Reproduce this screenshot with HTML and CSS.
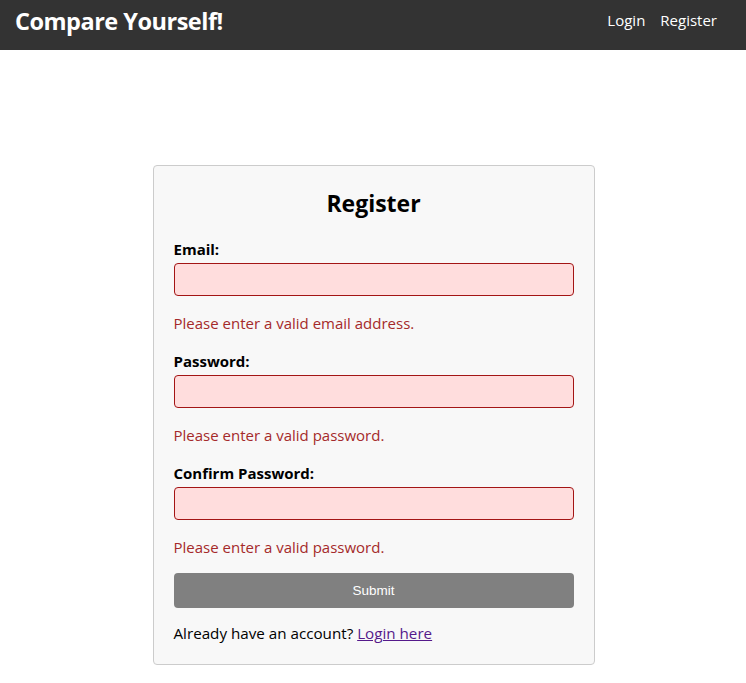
FILE: index.html
```html
<!DOCTYPE html>
<html lang="en">
<head>
<meta charset="utf-8">
<title>Compare Yourself</title>
<link rel="stylesheet" href="styles.css">
</head>
<body>
<header class="topbar">
  <div class="brand">Compare Yourself!</div>
  <nav class="nav">
    <a class="nav-link" href="#">Login</a>
    <a class="nav-link" href="#">Register</a>
  </nav>
</header>
<main class="page">
  <form class="card">
    <h2 class="card-title">Register</h2>
    <div class="field">
      <label class="label">Email:</label>
      <input class="input" type="text">
      <p class="error">Please enter a valid email address.</p>
    </div>
    <div class="field">
      <label class="label">Password:</label>
      <input class="input" type="password">
      <p class="error">Please enter a valid password.</p>
    </div>
    <div class="field">
      <label class="label">Confirm Password:</label>
      <input class="input" type="password">
      <p class="error">Please enter a valid password.</p>
    </div>
    <button class="submit" type="button">Submit</button>
    <p class="alt">Already have an account? <a class="alt-link" href="#">Login here</a></p>
  </form>
</main>
</body>
</html>
```
FILE: styles.css
```css
* { box-sizing: border-box; }
html, body { margin: 0; padding: 0; background: #fff; }
body { font-family: "Open Sans", "Noto Sans", sans-serif; color: #000; }

.topbar {
  height: 50px;
  background: #333333;
  display: flex;
  align-items: flex-start;
  justify-content: space-between;
  padding: 5px 29px 0 15px;
}
.brand {
  color: #fff;
  font-weight: 700;
  font-size: 23.5px;
  line-height: 32px;
  letter-spacing: -0.5px;
}
.nav { display: flex; gap: 15px; }
.nav-link {
  color: #fff;
  text-decoration: none;
  font-size: 15px;
  line-height: 30px;
}

.page {
  display: flex;
  justify-content: center;
  padding: 115px 0 20px 1px;
}
.card {
  width: 442px;
  background: #f8f8f8;
  border: 1px solid #cccccc;
  border-radius: 4px;
  padding: 21px 20px 20px;
}
.card-title {
  margin: 0 0 18px;
  text-align: center;
  font-size: 23px;
  line-height: 32px;
  font-weight: 700;
}
.field { margin-bottom: 15px; }
.label {
  display: block;
  font-weight: 700;
  font-size: 15px;
  line-height: 20px;
  padding-top: 2px;
  margin-bottom: 4px;
}
.input {
  display: block;
  width: 100%;
  height: 33px;
  background: #ffdddd;
  border: 1px solid #a31515;
  border-radius: 4px;
  margin: 0;
}
.error {
  margin: 17px 0 0;
  color: #a52a2a;
  font-size: 15px;
  line-height: 21px;
}
.submit {
  display: block;
  width: 100%;
  height: 35px;
  border: none;
  border-radius: 4px;
  background: #808080;
  color: #fff;
  font-family: "Liberation Sans", Arial, sans-serif;
  font-size: 13.5px;
}
.alt {
  margin: 15px 0 0;
  font-size: 15.2px;
  line-height: 21px;
}
.alt-link { color: #551a8b; }
```
